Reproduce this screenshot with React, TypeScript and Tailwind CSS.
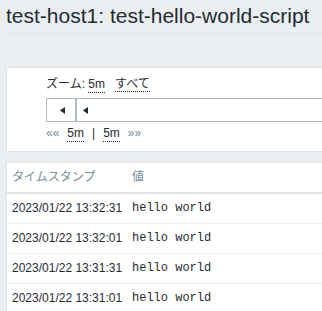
const sans = "font-['Liberation_Sans','Noto_Sans_CJK_JP',sans-serif]";

const rows = [
  { clock: "2023/01/22 13:32:31", value: "hello world" },
  { clock: "2023/01/22 13:32:01", value: "hello world" },
  { clock: "2023/01/22 13:31:31", value: "hello world" },
  { clock: "2023/01/22 13:31:01", value: "hello world" },
];

function Arrow() {
  return (
    <svg width="5" height="7" viewBox="0 0 5 7" className="block">
      <polygon points="5,0 5,7 0,3.5" fill="#1f2c33" />
    </svg>
  );
}

function DottedLink({ children }: { children: React.ReactNode }) {
  return <span className="border-b border-dotted border-[#1f2c33]">{children}</span>;
}

export default function App() {
  return (
    <div className={`h-[311px] w-[322px] overflow-hidden bg-[#ebeef0] text-[12px] leading-[16px] text-[#1f2c33] ${sans}`}>
      <div className="w-[1000px] pl-[6px]">
        <div className="border-b border-[#dfe4e7] pb-[5px] pt-[4px]">
          <h1 className="text-[21px] leading-[24px] font-normal">test-host1: test-hello-world-script</h1>
        </div>

        {/* time selector */}
        <div className="mt-[33px] border border-[#dfe4e7] bg-white pb-[9px] pl-[39px] pt-[8px]">
          <div className="flex">
            <span>ズーム:&nbsp;</span>
            <DottedLink>5m</DottedLink>
            <span className="ml-[10px]">
              <DottedLink>すべて</DottedLink>
            </span>
          </div>
          <div className="mt-[5px] flex h-[24px]">
            <div className="flex w-[30px] items-center justify-center border border-[#acbbc2] pl-[2px]">
              <Arrow />
            </div>
            <div className="flex flex-1 items-center border border-[#acbbc2] pl-[6px]">
              <Arrow />
            </div>
          </div>
          <div className="mt-[3px] flex gap-2">
            <span className="text-[#768d99]">««</span>
            <DottedLink>5m</DottedLink>
            <span>|</span>
            <DottedLink>5m</DottedLink>
            <span className="text-[#768d99]">»»</span>
          </div>
        </div>

        {/* history table */}
        <div className="mt-[10px] border border-[#dfe4e7] bg-white">
          <div className="flex h-[31px] items-center border-b-2 border-[#dfe4e7] pb-[1px] text-[#768d99]">
            <div className="w-[120px] pl-[5px]">タイムスタンプ</div>
            <div className="pl-[5px]">値</div>
          </div>
          {rows.map((row) => (
            <div key={row.clock} className="flex h-[30px] items-center border-b border-[#ebeef0] pb-[2px]">
              <div className="w-[120px] pl-[5px]">{row.clock}</div>
              <div className="pl-[5px] font-['Liberation_Mono',monospace]">{row.value}</div>
            </div>
          ))}
        </div>
      </div>
    </div>
  );
}
